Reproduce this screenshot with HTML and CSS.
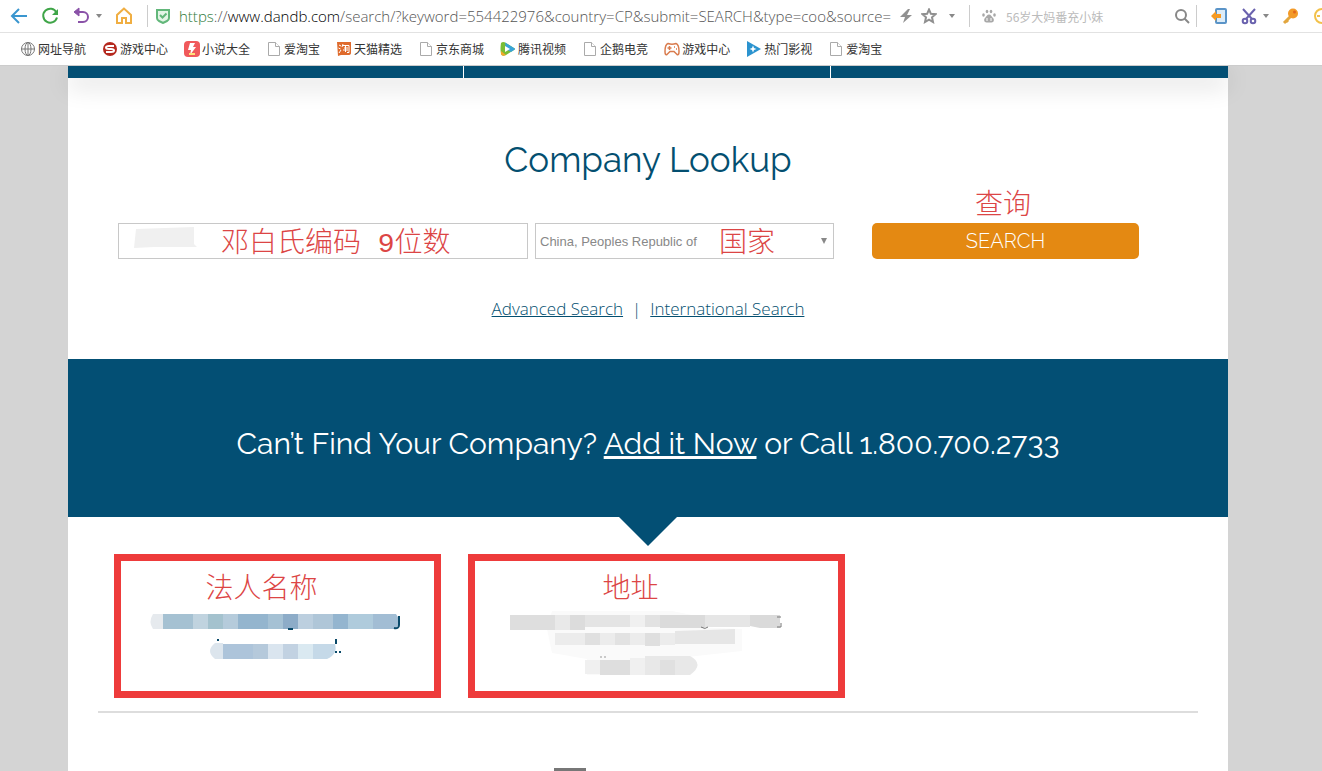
FILE: index.html
```
<!DOCTYPE html>
<html lang="en">

<head>
    <meta charset="UTF-8">
    <meta name="viewport" content="width=device-width, initial-scale=1.0">
    <title>Company Lookup</title>
    <link rel="stylesheet" href="styles.css">
</head>

<body>
    <header class="browser">
        <div class="toolbar">
            <div class="nav-buttons">
                <button class="icon-button" aria-label="Back"><svg width="18" height="18" viewBox="0 0 18 18" fill="none" stroke="#3a96cf" stroke-width="2"><path d="M17 9H2M9 2L2 9l7 7"/></svg></button>
                <button class="icon-button" aria-label="Reload"><svg width="18" height="18" viewBox="0 0 18 18" fill="none" stroke="#3fa548" stroke-width="2"><path d="M15.500 5.500A7 7 0 1 0 16 10.500"/><path d="M17 2v6h-6z" fill="#3fa548" stroke="none"/></svg></button>
                <button class="icon-button undo" aria-label="Undo"><svg width="18" height="18" viewBox="0 0 18 18" fill="none" stroke="#8a52a8" stroke-width="2"><path d="M3 5h8a5 5 0 0 1 0 10H6"/><path d="M7 1L2 5l5 4z" fill="#8a52a8" stroke-width="1"/></svg><span class="caret"></span></button>
                <button class="icon-button" aria-label="Home"><svg width="18" height="18" viewBox="0 0 18 18" fill="none" stroke="#f0ae42" stroke-width="2"><path d="M9 1.500L2 8v8h5v-5h4v5h5V8z"/></svg></button>
            </div>
            <span class="divider"></span>
            <div class="address">
                <svg width="16" height="16" viewBox="0 0 16 16" fill="none" stroke="#62b77a" stroke-width="2"><path d="M2 2h12v8q0 2-2 3l-4 2-4-2q-2-1-2-3z" fill="#e3f5e6"/><path d="M5 7l2.500 2.500L11.500 5.500"/></svg>
                <div class="url"><span class="scheme">https</span>://<span class="host">www.dandb.com</span>/search/?keyword=554422976&amp;country=CP&amp;submit=SEARCH&amp;type=coo&amp;source=</div>
                <svg width="14" height="14" viewBox="0 0 14 14" fill="#909090"><path d="M9 0L1 8h5l-2 6 9-8H8l3-6z"/></svg>
                <button class="icon-button" aria-label="Favourite"><svg width="16" height="16" viewBox="0 0 16 16" fill="none" stroke="#909090" stroke-width="2"><path d="M8 1.500l1.900 4.300 4.600.4-3.500 3.100 1 4.700L8 11.600 4 14l1-4.700L1.500 6.200l4.600-.4z"/></svg></button>
                <span class="caret"></span>
            </div>
            <span class="divider"></span>
            <div class="quick-search">
                <svg width="14" height="14" viewBox="0 0 14 14" fill="#a8a8a8"><ellipse cx="1.500" cy="6" rx="1.300" ry="1.700"/><ellipse cx="5" cy="2.500" rx="1.300" ry="1.700"/><ellipse cx="9" cy="2.500" rx="1.300" ry="1.700"/><ellipse cx="12.500" cy="6" rx="1.300" ry="1.700"/><path d="M7 5.500c2 0 2.500 2 4 3.500s1 4.500-1.500 4.500h-5C2 13.500 1.500 10.500 3 9s2-3.500 4-3.500z"/><path d="M5 9v3M9 9v3" stroke="#fff"/></svg>
                <input class="quick-input" type="text" placeholder="56岁大妈番充小妹" aria-label="Web search">
                <button class="icon-button" aria-label="Search the web"><svg width="16" height="16" viewBox="0 0 16 16" fill="none" stroke="#888" stroke-width="2"><circle cx="7" cy="7" r="5"/><path d="M10.500 10.500L15 15"/></svg></button>
            </div>
            <span class="divider"></span>
            <div class="tools">
                <button class="icon-button" aria-label="Send to phone"><svg width="18" height="18" viewBox="0 0 18 18"><rect x="6" y="2" width="10" height="14" rx="1" fill="#dcecf8" stroke="#5a94c8" stroke-width="2"/><path d="M1 9l5-5v3h5v4H6v3z" fill="#f59a23"/></svg></button>
                <button class="icon-button scissors" aria-label="Screenshot"><svg width="16" height="18" viewBox="0 0 16 18" fill="none" stroke="#6a62ae" stroke-width="2"><path d="M2 2l9 10M14 2L5 12"/><circle cx="4" cy="14" r="2.300"/><circle cx="12" cy="14" r="2.300"/></svg><span class="caret"></span></button>
                <button class="icon-button" aria-label="Passwords"><svg width="18" height="18" viewBox="0 0 18 18"><path d="M10 8L2 16M4 13l2 2" stroke="#e2a63e" stroke-width="3"/><circle cx="11" cy="6.500" r="5" fill="#f39a28"/><circle cx="12.500" cy="5" r="1.500" fill="#e2671c"/></svg></button>
                <button class="icon-button" aria-label="More"><svg width="18" height="18" viewBox="0 0 18 18" fill="none" stroke="#f2c14a" stroke-width="2"><circle cx="9" cy="9" r="7"/><path d="M4 9h3"/></svg></button>
            </div>
        </div>

        <nav class="bookmarks">
            <a class="bookmark" href="#"><svg width="16" height="16" viewBox="0 0 16 16" fill="none" stroke="#777"><circle cx="8" cy="8" r="6.500"/><ellipse cx="8" cy="8" rx="3" ry="6.500"/><path d="M8 1.500v13M1.500 8h13"/></svg>网址导航</a>
            <a class="bookmark" href="#"><svg width="16" height="16" viewBox="0 0 16 16"><circle cx="8" cy="8" r="7" fill="#b5281e"/><path d="M12 5H7Q4 5 4 6.500T7 8h2q3 0 3 1.500T9 11H4" fill="none" stroke="#fff" stroke-width="2"/></svg>游戏中心</a>
            <a class="bookmark" href="#"><svg width="16" height="16" viewBox="0 0 16 16"><rect width="16" height="16" rx="4" fill="#f0595b"/><path d="M6 2h5L9 6h3l-6 8 1-5H4z" fill="#fff"/><path d="M5 13h6" stroke="#ffe07a" stroke-width="2"/></svg>小说大全</a>
            <a class="bookmark" href="#"><svg width="16" height="16" viewBox="0 0 16 16" fill="#fff" stroke="#aaa"><path d="M2.500 1.500h7l4 4v9h-11z"/><path d="M9.500 1.500v4h4"/></svg>爱淘宝</a>
            <a class="bookmark" href="#"><svg width="16" height="16" viewBox="0 0 16 16"><path d="M1 1h14v11q0 2-3 2H5l-3 1z" fill="#df6b2d"/><path d="M3 4l2 1M2.500 7l2 1M3 12l2-3M7 3L6 6M7 4.500h6v7h-2M8 7h4M7 9h5M9.500 5v6" stroke="#fff" fill="none"/></svg>天猫精选</a>
            <a class="bookmark" href="#"><svg width="16" height="16" viewBox="0 0 16 16" fill="#fff" stroke="#aaa"><path d="M2.500 1.500h7l4 4v9h-11z"/><path d="M9.500 1.500v4h4"/></svg>京东商城</a>
            <a class="bookmark" href="#"><svg width="16" height="16" viewBox="0 0 16 16"><path d="M1 2Q3 0 6 2l8 5q2 1 0 2l-8 5q-4 2-5-1-1-5 0-11z" fill="#79bd35"/><path d="M5 1.500L14 7q2 1 0 2l-3 2-5-3z" fill="#38a3d9"/><path d="M1 10l5 4q-4 2-5-1z" fill="#f4a62a"/><path d="M5 5l5 3-5 3z" fill="#fff"/></svg>腾讯视频</a>
            <a class="bookmark" href="#"><svg width="16" height="16" viewBox="0 0 16 16" fill="#fff" stroke="#aaa"><path d="M2.500 1.500h7l4 4v9h-11z"/><path d="M9.500 1.500v4h4"/></svg>企鹅电竞</a>
            <a class="bookmark" href="#"><svg width="16" height="16" viewBox="0 0 16 16" fill="none" stroke="#d97b4d" stroke-width="1.500"><path d="M4 2.500q4 1.500 8 0 3 1 3 8 0 4-2 3l-3-3H6l-3 3q-2 1-2-3 0-7 3-8z"/><path d="M3.500 7h4M5.500 5v4M10 6h1M12 8h1"/></svg>游戏中心</a>
            <a class="bookmark" href="#"><svg width="16" height="16" viewBox="0 0 16 16"><path d="M1 0l14 8L1 16z" fill="#2b93cf"/><path d="M7 4.500l1 2.500 2.500 1L8 9l-1 2.500L6 9 3.500 8 6 7z" fill="#fff"/></svg>热门影视</a>
            <a class="bookmark" href="#"><svg width="16" height="16" viewBox="0 0 16 16" fill="#fff" stroke="#aaa"><path d="M2.500 1.500h7l4 4v9h-11z"/><path d="M9.500 1.500v4h4"/></svg>爱淘宝</a>
        </nav>
    </header>

    <div class="viewport">
        <main class="page">
            <div class="site-nav">
                <span class="site-tab"></span>
                <span class="site-tab"></span>
                <span class="site-tab"></span>
            </div>

            <section class="lookup">
                <h1 class="lookup-title">Company Lookup</h1>
                <form class="lookup-form">
                    <div class="field">
                        <input class="keyword" type="text" aria-label="Company keyword">
                        <svg class="masked-value" width="64" height="22" viewBox="0 0 64 22"><path d="M2 2L60 0v17l3 3H20L0 21z" fill="#f0f0f0"/></svg>
                        <span class="note note-keyword">邓白氏编码 9位数</span>
                    </div>
                    <div class="field">
                        <select class="country" aria-label="Country">
                            <option>China, Peoples Republic of</option>
                        </select>
                        <span class="select-arrow"></span>
                        <span class="note note-country">国家</span>
                    </div>
                    <div class="field field-submit">
                        <span class="note note-search">查询</span>
                        <button class="search-button" type="button">SEARCH</button>
                    </div>
                </form>
                <div class="search-links">
                    <a href="#">Advanced Search</a>
                    <span>|</span>
                    <a href="#">International Search</a>
                </div>
            </section>

            <section class="banner">
                <p class="banner-text">Can’t Find Your Company? <a href="#">Add it Now</a> or Call 1.800.700.2733</p>
            </section>

            <section class="results">
                <div class="result">
                    <h2 class="result-note">法人名称</h2>
                    <!-- masked company name -->
                    <svg class="mosaic" width="260" height="50" viewBox="0 0 260 50">
                        <path d="M5 5h10v15H5q-5-7 0-15z" fill="#e6eaee"/>
                        <path d="M15 5h30v15H15z" fill="#a5c1d2"/>
                        <path d="M45 5h15v15H45z" fill="#c0d3df"/>
                        <path d="M60 5h15v15H60z" fill="#a4c2ce"/>
                        <path d="M75 5h15v15H75z" fill="#b5cbdb"/>
                        <path d="M90 5h30v15H90z" fill="#94b5ce"/>
                        <path d="M120 5h15v15h-15z" fill="#a5c1d4"/>
                        <path d="M135 5h15v15h-15z" fill="#8dacc8"/>
                        <path d="M150 5h15v15h-15z" fill="#bccfdf"/>
                        <path d="M165 5h20v15h-20z" fill="#afc6d8"/>
                        <path d="M185 5h15v15h-15z" fill="#94b5cf"/>
                        <path d="M200 5h25v15h-25z" fill="#afcbdc"/>
                        <path d="M225 5h23q6 7 0 15h-23z" fill="#a2bdd4"/>
                        <path d="M251 7v9q0 4-5 3M140 20h5" fill="none" stroke="#0a4a6a" stroke-width="2"/>
                        <path d="M67 34h8v16h-8q-10-8 0-16z" fill="#dce5ed"/>
                        <path d="M75 35h30v15H75z" fill="#adc4da"/>
                        <path d="M105 35h15v15h-15z" fill="#b5c9db"/>
                        <path d="M120 35h15v15h-15z" fill="#dae5ef"/>
                        <path d="M135 35h15v15h-15z" fill="#c2d2e2"/>
                        <path d="M150 35h15v15h-15z" fill="#dae9f1"/>
                        <path d="M165 35h22q3 10-8 15h-14z" fill="#c5d9e8"/>
                        <path d="M188 30v5M188 42v2M192 42v2M69 31h2" stroke="#0a4a6a" stroke-width="2"/>
                    </svg>
                </div>
                <div class="result result-address">
                    <h2 class="result-note">地址</h2>
                    <!-- masked address -->
                    <svg class="mosaic" width="280" height="66" viewBox="0 0 280 66">
                        <path d="M45 2h120l20 4v12l50 2v22l-55 6v18H80V50l-35-6-5-24z" fill="#fafafa"/>
                        <path d="M3 6h45v15H3z" fill="#dedede"/>
                        <path d="M48 6h15v15H48z" fill="#e9e9e9"/>
                        <path d="M63 6h15v15H63z" fill="#dcdcdc"/>
                        <path d="M78 6h45v12H78z" fill="#e4e4e4"/>
                        <path d="M123 6h15v12h-15z" fill="#f0f0f0"/>
                        <path d="M138 6h15v12h-15z" fill="#e2e2e2"/>
                        <path d="M153 6h45v13h-45z" fill="#dbdbdb"/>
                        <path d="M198 6h45v12h-45z" fill="#e6e6e6"/>
                        <path d="M243 6h30v13h-20l-10-2z" fill="#dadada"/>
                        <path d="M194 18q4 3 7 0M270 8h4M270 18h4v-4" fill="none" stroke="#777"/>
                        <path d="M48 24h120v12H48z" fill="#ececec"/>
                        <path d="M78 24h15v12H78z" fill="#e0e0e0"/>
                        <path d="M108 24h15v12h-15z" fill="#e2e2e2"/>
                        <path d="M138 24h15v13h-15z" fill="#dfdfdf"/>
                        <path d="M168 22l60-2v15h-60z" fill="#e6e6e6"/>
                        <path d="M78 51h15v14H78z" fill="#f0f0f0"/>
                        <path d="M93 51h30v15H93z" fill="#dedede"/>
                        <path d="M123 49h15v17h-15z" fill="#f0f0f0"/>
                        <path d="M138 47h45q15 8 0 19h-45z" fill="#e8e8e8"/>
                        <path d="M153 51h15v15h-15z" fill="#e0e0e0"/>
                        <path d="M93 48h7" stroke="#999" stroke-dasharray="2 2"/>
                    </svg>
                </div>
            </section>
            <hr class="rule">
            <div class="page-mark"></div>
        </main>
    </div>
</body>

</html>
```
FILE: styles.css
```
* {
    box-sizing: border-box;
}

body {
    margin: 0;
    height: 100vh;
    display: flex;
    flex-direction: column;
    overflow: hidden;
    font-family: "Open Sans", "Noto Sans CJK SC", sans-serif;
    background: #d4d4d4;
}

svg {
    flex: none;
    display: block;
}

/* browser bars */
.browser {
    flex: none;
    background: #fff;
    border-bottom: 1px solid #ccc;
    overflow: hidden;
}

.toolbar {
    display: flex;
    align-items: center;
    height: 33px;
    padding-left: 10px;
    border-bottom: 1px solid #e2e2e2;
}

.icon-button {
    display: flex;
    align-items: center;
    gap: 6px;
    padding: 0;
    border: none;
    background: none;
}

.nav-buttons {
    display: flex;
    gap: 13px;
    padding-right: 14px;
}

.caret {
    border: 3px solid transparent;
    border-top: 4px solid #888;
    border-bottom: 0;
}

.divider {
    width: 1px;
    height: 22px;
    background: #ccc;
    flex: none;
}

.address {
    flex: 1;
    min-width: 0;
    display: flex;
    align-items: center;
    gap: 8px;
    padding: 0 14px 0 7px;
}

.address .caret {
    margin-left: 4px;
}

.url {
    flex: 1;
    min-width: 0;
    overflow: hidden;
    white-space: nowrap;
    font-size: 15px;
    font-weight: 300;
    line-height: 24px;
    color: #555;
}

.scheme {
    color: #2f7a3a;
}

.host {
    color: #000;
}

.quick-search {
    display: flex;
    align-items: center;
    gap: 10px;
    padding: 0 6px 0 12px;
    width: 226px;
}

.quick-input {
    flex: 1;
    min-width: 0;
    padding: 0;
    border: none;
    font-family: "Noto Sans CJK SC", sans-serif;
    font-size: 12px;
}

.quick-input::placeholder {
    color: #bbb;
}

.tools {
    display: flex;
    gap: 13px;
    padding-left: 13px;
    width: 125px;
}

.bookmarks {
    display: flex;
    align-items: center;
    gap: 16px;
    height: 32px;
    padding-left: 20px;
}

.bookmark {
    flex: none;
    display: flex;
    align-items: center;
    gap: 2px;
    font-family: "Noto Sans CJK SC", sans-serif;
    font-size: 12px;
    line-height: 16px;
    color: #333;
    text-decoration: none;
}

/* web page */
.viewport {
    flex: 1;
    min-height: 0;
    overflow: hidden;
    padding: 0 94px 0 68px;
}

.page {
    min-height: 100%;
    background: #fff;
    color: #034f70;
}

.site-nav {
    display: grid;
    grid-template-columns: 395fr 366fr 397fr;
    gap: 1px;
    height: 12px;
    background: #fff;
    box-shadow: 0 8px 24px rgba(0, 0, 0, 0.15);
}

.site-tab {
    background: #034f74;
}

.lookup {
    padding: 58px 0 37px;
    text-align: center;
}

.lookup-title {
    margin: 0;
    font-family: Raleway, Lato, sans-serif;
    font-size: 35px;
    font-weight: 400;
    line-height: 48px;
}

.lookup-form {
    display: grid;
    grid-template-columns: 410fr 299fr 298fr;
    gap: 7px;
    padding: 39px 89px 0 50px;
}

.field {
    position: relative;
    display: flex;
}

.field-submit {
    padding-left: 31px;
}

.keyword,
.country {
    width: 100%;
    height: 36px;
    border: 1px solid #c8c8c8;
    border-radius: 0;
    background: #fff;
}

.keyword {
    padding: 0 16px;
    font-size: 13px;
}

.country {
    appearance: none;
    padding: 0 4px;
    font-family: "Liberation Sans", sans-serif;
    font-size: 13px;
    color: #888;
}

.select-arrow {
    position: absolute;
    right: 7px;
    top: 15px;
    border: 3px solid transparent;
    border-top: 6px solid #888;
    border-bottom: 0;
}

.masked-value {
    position: absolute;
    left: 16px;
    top: 4px;
}

.search-button {
    width: 100%;
    height: 36px;
    padding: 0;
    border: none;
    border-radius: 5px;
    background: #e48912;
    color: #fff;
    font-family: Raleway, Lato, sans-serif;
    font-size: 20px;
    font-weight: 300;
}

.note,
.result-note {
    font-family: "Liberation Mono", "Noto Sans CJK SC", monospace;
    font-size: 28px;
    font-weight: 300;
    line-height: 36px;
    color: #dc4545;
    white-space: nowrap;
}

.note {
    position: absolute;
    top: 4px;
}

.note-keyword {
    left: 103px;
}

.note-country {
    left: 184px;
}

.note-search {
    left: 134px;
    top: -34px;
}

.search-links {
    display: flex;
    justify-content: center;
    gap: 9px;
    padding-top: 37px;
    font-size: 17px;
    font-weight: 300;
    line-height: 26px;
}

.search-links a {
    color: #034f70;
}

.banner {
    position: relative;
    padding: 65px 20px 53px;
    background: #034f74;
    text-align: center;
}

.banner::after {
    content: "";
    position: absolute;
    top: 100%;
    left: 50%;
    margin-left: -29px;
    border: 29px solid transparent;
    border-top-color: #034f74;
    border-bottom: 0;
}

.banner-text {
    margin: 0;
    font-family: Raleway, Lato, sans-serif;
    font-size: 30px;
    line-height: 40px;
    color: #fff;
}

.banner-text a {
    color: #fff;
}

.results {
    display: grid;
    grid-template-columns: 327fr 377fr 356fr;
    gap: 27px;
    padding: 37px 0 13px 46px;
}

.result {
    display: flex;
    flex-direction: column;
    align-items: center;
    height: 144px;
    padding-top: 12px;
    border: 7px solid #ee3b3b;
}

.result-address {
    padding-right: 20px;
}

.result-note {
    margin: 0;
    padding-right: 32px;
}

.rule {
    margin: 0 30px;
    border: none;
    border-top: 2px solid #ddd;
}

.page-mark {
    width: 32px;
    height: 4px;
    margin: 55px 0 0 486px;
    background: #777;
}
```
